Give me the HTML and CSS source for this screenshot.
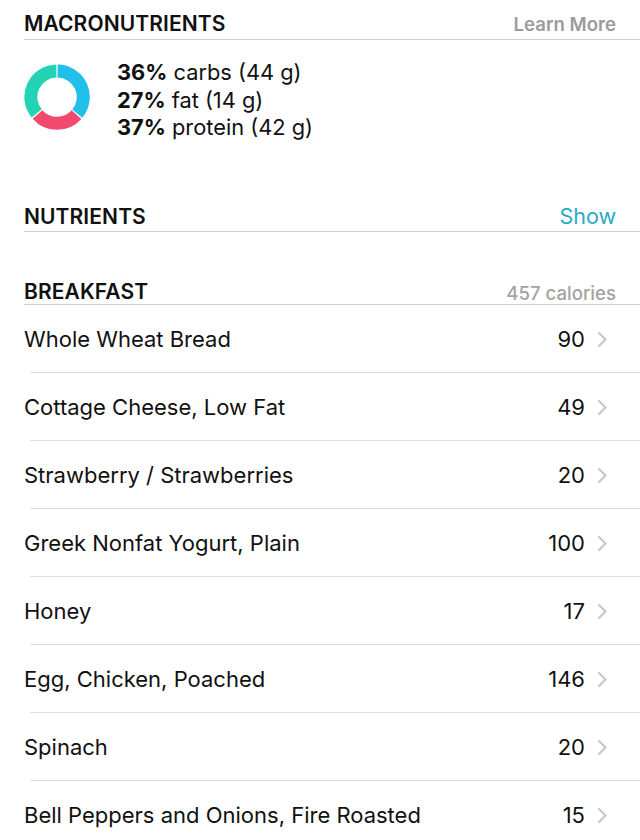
FILE: index.html
```html
<!DOCTYPE html>
<html>
<head>
<meta charset="utf-8">
<link rel="stylesheet" href="styles.css">
</head>
<body>
<div class="page">
  <div class="section-head head-macro">
    <span class="title">MACRONUTRIENTS</span>
    <span class="aside gray">Learn More</span>
  </div>
  <div class="macro">
    <svg class="donut" width="66" height="66" viewBox="0 0 66 66">
      <g fill="none" stroke-width="13">
        <path d="M33.6 7 A26 26 0 0 1 53.3 49.6" stroke="#22bfeb"/>
        <path d="M52.5 50.6 A26 26 0 0 1 13.5 50.4" stroke="#f24a6e"/>
        <path d="M12.7 49.4 A26 26 0 0 1 32.4 7" stroke="#23d3b5"/>
      </g>
    </svg>
    <div class="macro-lines">
      <div><b>36%</b> carbs (44 g)</div>
      <div><b>27%</b> fat (14 g)</div>
      <div><b>37%</b> protein (42 g)</div>
    </div>
  </div>
  <div class="section-head head-nutr">
    <span class="title">NUTRIENTS</span>
    <span class="aside link">Show</span>
  </div>
  <div class="section-head head-break">
    <span class="title">BREAKFAST</span>
    <span class="aside gray small">457 calories</span>
  </div>
  <ul class="foods">
    <li><span class="name">Whole Wheat Bread</span><span class="cal">90</span><svg class="chev" width="11" height="17" viewBox="0 0 11 17"><polyline points="2,2 8.5,8.5 2,15"/></svg></li>
    <li><span class="name">Cottage Cheese, Low Fat</span><span class="cal">49</span><svg class="chev" width="11" height="17" viewBox="0 0 11 17"><polyline points="2,2 8.5,8.5 2,15"/></svg></li>
    <li><span class="name">Strawberry / Strawberries</span><span class="cal">20</span><svg class="chev" width="11" height="17" viewBox="0 0 11 17"><polyline points="2,2 8.5,8.5 2,15"/></svg></li>
    <li><span class="name">Greek Nonfat Yogurt, Plain</span><span class="cal">100</span><svg class="chev" width="11" height="17" viewBox="0 0 11 17"><polyline points="2,2 8.5,8.5 2,15"/></svg></li>
    <li><span class="name">Honey</span><span class="cal">17</span><svg class="chev" width="11" height="17" viewBox="0 0 11 17"><polyline points="2,2 8.5,8.5 2,15"/></svg></li>
    <li><span class="name">Egg, Chicken, Poached</span><span class="cal">146</span><svg class="chev" width="11" height="17" viewBox="0 0 11 17"><polyline points="2,2 8.5,8.5 2,15"/></svg></li>
    <li><span class="name">Spinach</span><span class="cal">20</span><svg class="chev" width="11" height="17" viewBox="0 0 11 17"><polyline points="2,2 8.5,8.5 2,15"/></svg></li>
    <li><span class="name">Bell Peppers and Onions, Fire Roasted</span><span class="cal">15</span><svg class="chev" width="11" height="17" viewBox="0 0 11 17"><polyline points="2,2 8.5,8.5 2,15"/></svg></li>
  </ul>
</div>
</body>
</html>
```
FILE: styles.css
```css
html, body {
  margin: 0;
  padding: 0;
  background: #ffffff;
}
body {
  font-family: Inter, "Liberation Sans", sans-serif;
  color: #111111;
  overflow: hidden;
}
.page {
  padding-left: 24px;
}
.section-head {
  display: flex;
  justify-content: space-between;
  align-items: flex-end;
  border-bottom: 1px solid #cfcfcf;
  padding-right: 24px;
  box-sizing: border-box;
}
.head-macro {
  height: 40px;
  padding-bottom: 3px;
}
.head-nutr {
  height: 74px;
  padding-bottom: 2px;
}
.head-break {
  height: 73px;
  padding-bottom: 0px;
}
.title {
  font-size: 21px;
  font-weight: 600;
  letter-spacing: 0.1px;
  line-height: 24px;
  color: #111;
}
.aside {
  line-height: 24px;
}
.gray {
  color: #9b9b9b;
  font-size: 18.6px;
  font-weight: 600;
}
.gray.small {
  font-weight: 500;
  font-size: 18.6px;
  line-height: 22px;
  color: #a3a3a3;
}
.link {
  color: #2aaac7;
  font-size: 21.5px;
  line-height: 26px;
}
.macro {
  display: flex;
  align-items: flex-start;
  height: 118px;
  padding-top: 18px;
  box-sizing: border-box;
}
.donut {
  margin-top: 6px;
  margin-right: 27px;
  flex: none;
}
.macro-lines {
  font-size: 21.8px;
  line-height: 27.5px;
  color: #111;
  margin-top: 1px;
}
.macro-lines b {
  font-weight: 700;
}
.foods {
  list-style: none;
  margin: 0;
  padding: 0;
}
.foods li {
  display: flex;
  align-items: center;
  height: 68px;
  box-sizing: border-box;
  position: relative;
  font-size: 22px;
  padding-right: 32px;
}
.foods li + li::before {
  content: "";
  position: absolute;
  left: 6px;
  right: 0;
  top: -1px;
  border-top: 1px solid #dcdcdc;
}
.foods .name {
  flex: 1;
  color: #111;
}
.foods .cal {
  color: #111;
}
.chev {
  flex: none;
  margin-left: 12px;
  fill: none;
  stroke: #c7c7c7;
  stroke-width: 2.2;
  stroke-linecap: round;
  stroke-linejoin: round;
}
```
